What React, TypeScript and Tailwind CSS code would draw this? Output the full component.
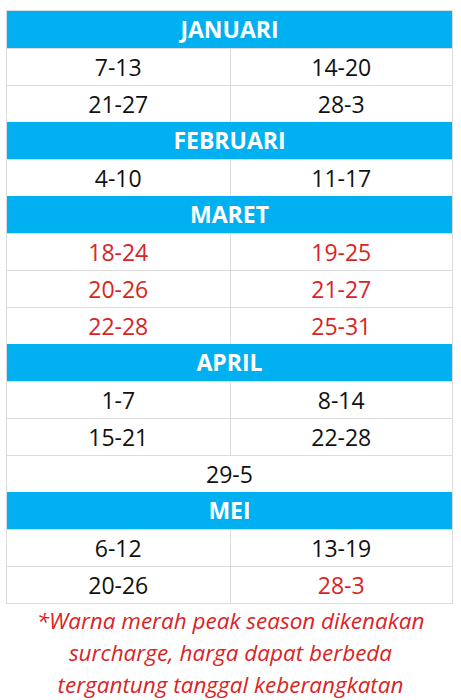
import React from "react";

type Cell = { text: string; red?: boolean };
type Month = { name: string; rows: Cell[][] };

const MONTHS: Month[] = [
  {
    name: "JANUARI",
    rows: [
      [{ text: "7-13" }, { text: "14-20" }],
      [{ text: "21-27" }, { text: "28-3" }],
    ],
  },
  {
    name: "FEBRUARI",
    rows: [[{ text: "4-10" }, { text: "11-17" }]],
  },
  {
    name: "MARET",
    rows: [
      [{ text: "18-24", red: true }, { text: "19-25", red: true }],
      [{ text: "20-26", red: true }, { text: "21-27", red: true }],
      [{ text: "22-28", red: true }, { text: "25-31", red: true }],
    ],
  },
  {
    name: "APRIL",
    rows: [
      [{ text: "1-7" }, { text: "8-14" }],
      [{ text: "15-21" }, { text: "22-28" }],
      [{ text: "29-5" }],
    ],
  },
  {
    name: "MEI",
    rows: [
      [{ text: "6-12" }, { text: "13-19" }],
      [{ text: "20-26" }, { text: "28-3", red: true }],
    ],
  },
];

export default function App() {
  return (
    <div className="min-h-[700px] w-[461px] bg-white pt-[10px] font-['Open_Sans',sans-serif]">
      <div className="mx-[6px] w-[447px] border border-[#dcdcdc]">
        {MONTHS.map((m) => (
          <div key={m.name}>
            {/* month header */}
            <div className="flex h-[37px] items-center justify-center bg-[#00b0f0] text-[23px] font-bold text-white">
              {m.name}
            </div>
            {m.rows.map((row, i) => (
              <div key={i} className="grid h-[37px] grid-flow-col auto-cols-fr border-t border-[#dcdcdc]">
                {row.map((c, j) => (
                  <div
                    key={j}
                    className={`flex items-center justify-center text-[23px] ${j > 0 ? "border-l border-[#dcdcdc]" : ""} ${
                      c.red ? "text-[#d92424]" : "text-[#111111]"
                    }`}
                  >
                    {c.text}
                  </div>
                ))}
              </div>
            ))}
          </div>
        ))}
      </div>

      {/* footnote */}
      <p className="mt-[1px] text-center text-[22.5px] italic leading-[32px] text-[#d92424]">
        *Warna merah peak season dikenakan
        <br />
        surcharge, harga dapat berbeda
        <br />
        tergantung tanggal keberangkatan
      </p>
    </div>
  );
}
